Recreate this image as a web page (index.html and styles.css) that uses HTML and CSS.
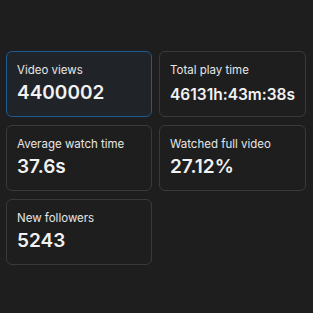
FILE: index.html
```html
<!DOCTYPE html>
<html lang="en">
<head>
    <meta charset="UTF-8">
    <meta name="viewport" content="width=device-width, initial-scale=1.0">
    <title>Video stats</title>
    <link rel="stylesheet" href="styles.css">
</head>
<body>
    <div class="stats">
        <div class="card active">
            <div class="label">Video views</div>
            <div class="value">4400002</div>
        </div>
        <div class="card">
            <div class="label">Total play time</div>
            <div class="value small">46131h:43m:38s</div>
        </div>
        <div class="card">
            <div class="label">Average watch time</div>
            <div class="value">37.6s</div>
        </div>
        <div class="card">
            <div class="label">Watched full video</div>
            <div class="value">27.12%</div>
        </div>
        <div class="card">
            <div class="label">New followers</div>
            <div class="value">5243</div>
        </div>
    </div>
</body>
</html>
```

FILE: styles.css
```css
body {
    font-family: Inter, "Noto Sans", sans-serif;
    background-color: #1e1e1e;
    color: #f2f2f2;
    margin: 0;
    padding: 0;
}
.stats {
    display: grid;
    grid-template-columns: 146px 147px;
    grid-auto-rows: 66px;
    column-gap: 7px;
    row-gap: 8px;
    padding: 51px 0 0 6px;
}
.card {
    box-sizing: border-box;
    border: 1px solid #3a3a3a;
    border-radius: 6px;
    padding: 10px 10px;
}
.card.active {
    border-color: #1d5b96;
    background-color: #202328;
}
.label {
    font-size: 11.5px;
    line-height: 16px;
    color: #e6e6e6;
}
.value {
    font-size: 19px;
    font-weight: 600;
    line-height: 26px;
    margin-top: 2px;
}
.value.small {
    font-size: 15.5px;
    margin-top: 4px;
}
```
